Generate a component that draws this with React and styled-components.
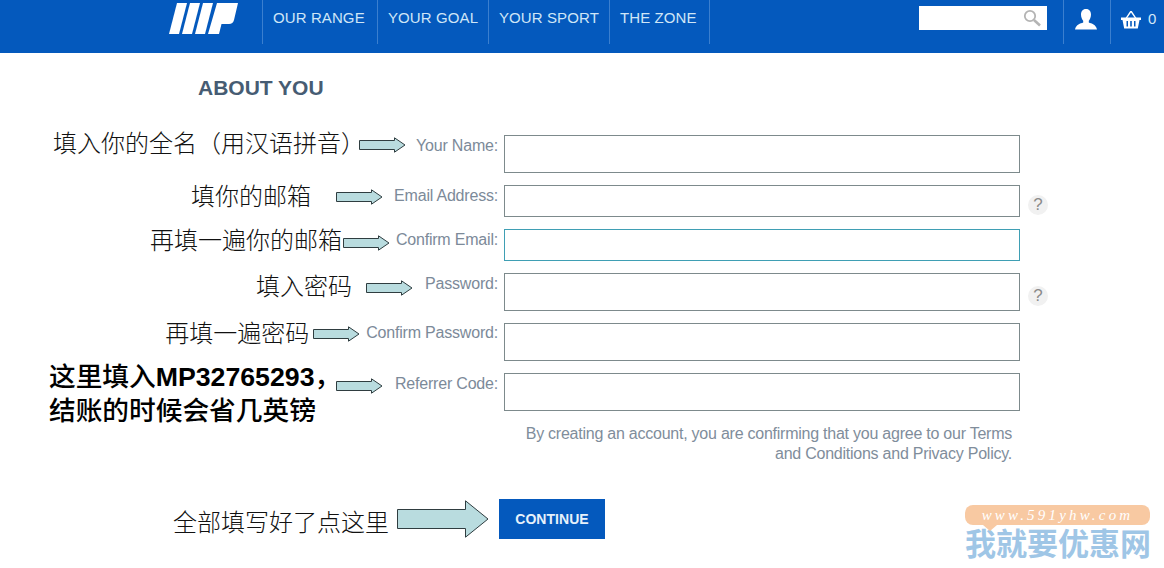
import React from "react";
import styled, { createGlobalStyle } from "styled-components";

const GlobalStyle = createGlobalStyle`
  html, body {
    margin: 0;
    padding: 0;
    background: #fff;
    font-family: "Liberation Sans", Arial, sans-serif;
  }
`;

const Page = styled.div`
  position: relative;
  width: 1164px;
  height: 568px;
  overflow: hidden;
  background: #fff;
`;

const Header = styled.header`
  height: 53px;
  display: flex;
  align-items: flex-start;
  padding-left: 169px;
  background: #0459bd;
  box-sizing: border-box;
`;

const Logo = styled.svg`
  width: 70px;
  height: 31px;
  margin: 3px 23px 0 0;
  flex: none;
`;

const Nav = styled.nav`
  display: flex;
  height: 44px;
  border-right: 1px solid #3b7fcf;
`;

const NavItem = styled.a`
  height: 44px;
  width: ${(props) => props.$width}px;
  box-sizing: border-box;
  padding: 9px 0 0 10px;
  border-left: 1px solid #3b7fcf;
  color: #cfe6f7;
  font-size: 15px;
  line-height: 18px;
  letter-spacing: 0.1px;
  white-space: nowrap;
`;

const HeaderRight = styled.div`
  display: flex;
  margin-left: auto;
  height: 44px;
`;

const Search = styled.div`
  width: 128px;
  height: 24px;
  margin: 6px 16px 0 0;
  padding-right: 6px;
  box-sizing: border-box;
  display: flex;
  align-items: center;
  justify-content: flex-end;
  background: #fff;
  color: #b4b4b4;
`;

const IconCell = styled.div`
  width: ${(props) => props.$width}px;
  box-sizing: border-box;
  display: flex;
  align-items: flex-start;
  padding: 9px 0 0 ${(props) => props.$pad}px;
  gap: 7px;
  border-left: 1px solid #3b7fcf;
  color: #fff;
`;

const Count = styled.span`
  color: #d6e8f8;
  font-size: 15px;
  line-height: 20px;
  letter-spacing: 0.5px;
`;

const Main = styled.main`
  padding-top: 23px;
`;

const Title = styled.h1`
  margin: 0 0 35px 198px;
  color: #465c73;
  font-size: 21px;
  line-height: 24px;
  font-weight: 700;
`;

const Form = styled.div`
  display: flex;
  flex-direction: column;
  gap: 12px;
`;

const Row = styled.div`
  display: flex;
  align-items: flex-start;
`;

const LabelSide = styled.div`
  width: 498px;
  display: flex;
  justify-content: flex-end;
  align-items: flex-start;
  margin-right: 6px;
`;

const Note = styled.span`
  margin-top: ${(props) => props.$top}px;
  margin-right: ${(props) => props.$gap}px;
  color: #111;
  font-family: "Noto Sans CJK SC", sans-serif;
  font-size: 24px;
  font-weight: 300;
  line-height: 28px;
  white-space: nowrap;
`;

const BoldNote = styled.div`
  height: 68px;
  margin: -15px 20px -30px 0;
  width: 267px;
  color: #000;
  font-family: "Noto Sans CJK SC", sans-serif;
  font-size: 26.7px;
  font-weight: 500;
  line-height: 34px;
  white-space: nowrap;

  b {
    font-family: "Liberation Sans", sans-serif;
    font-weight: 700;
    line-height: 1;
  }
`;

const ArrowSvg = styled.svg`
  flex: none;
  margin-top: ${(props) => props.$top}px;
  margin-right: ${(props) => props.$gap}px;
`;

const Label = styled.label`
  margin-top: ${(props) => props.$top}px;
  color: #7c8a99;
  font-size: 16px;
  line-height: 20px;
  letter-spacing: -0.2px;
  white-space: nowrap;
`;

const Input = styled.div`
  width: 516px;
  height: ${(props) => props.$height}px;
  box-sizing: border-box;
  border: 1px solid ${(props) => (props.$focus ? "#3f9fb4" : "#7d8a8c")};
  background: #fff;
`;

const Help = styled.span`
  width: 20px;
  height: 20px;
  margin: ${(props) => props.$top}px 0 0 8px;
  border-radius: 50%;
  background: #f1f1f1;
  color: #8b8b8b;
  font-size: 17px;
  line-height: 20px;
  text-align: center;
`;

const Terms = styled.p`
  width: 500px;
  margin: 13px 0 0 512px;
  color: #808d9b;
  font-size: 16px;
  line-height: 20px;
  letter-spacing: -0.24px;
  text-align: right;
`;

const Submit = styled.div`
  display: flex;
  align-items: center;
  margin: 35px 0 0 173px;
`;

const SubmitNote = styled(Note)`
  margin: 4px 8px 0 0;
`;

const Button = styled.button`
  width: 106px;
  height: 40px;
  margin-left: 10px;
  border: 0;
  background: #0459bd;
  color: #e6f1fb;
  font-family: "Liberation Sans", sans-serif;
  font-size: 14px;
  font-weight: 700;
  letter-spacing: 0.05px;
`;

const Watermark = styled.div`
  position: absolute;
  left: 965px;
  top: 505px;
  width: 185px;
`;

const Bubble = styled.div`
  position: relative;
  height: 20px;
  border-radius: 8px;
  background: #f8c9a2;
  color: #fff;
  font-family: "Liberation Serif", serif;
  font-style: italic;
  font-size: 15px;
  line-height: 20px;
  letter-spacing: 3.2px;
  text-align: center;

  &::after {
    content: "";
    position: absolute;
    left: 18px;
    top: 20px;
    border-top: 6px solid #f8c9a2;
    border-left: 7px solid transparent;
    border-right: 7px solid transparent;
  }
`;

const SiteName = styled.div`
  margin-top: -1px;
  color: #9fc6e6;
  font-family: "Noto Sans CJK SC", sans-serif;
  font-size: 31px;
  font-weight: 700;
  line-height: 36px;
  white-space: nowrap;
`;

function Arrow({ top, gap }) {
  return (
    <ArrowSvg width="47" height="16" viewBox="0 0 47 16" $top={top} $gap={gap}>
      <path
        d="M0.5 3.5H35.5V0.8L46 8L35.5 15.2V12.5H0.5Z"
        fill="#b9dcdf"
        stroke="#2f3d40"
        strokeWidth="1"
      />
    </ArrowSvg>
  );
}

const rows = [
  { label: "Your Name:", height: 38, labelTop: 1, note: "填入你的全名（用汉语拼音）", noteTop: -7, noteGap: -6, arrowTop: 2, arrowGap: 10 },
  { label: "Email Address:", height: 32, labelTop: 1, note: "填你的邮箱", noteTop: -4, noteGap: 25, arrowTop: 4, arrowGap: 11, help: 10 },
  { label: "Confirm Email:", height: 32, labelTop: 1, note: "再填一遍你的邮箱", noteTop: -4, noteGap: 1, arrowTop: 6, arrowGap: 6, focus: true },
  { label: "Password:", height: 38, labelTop: 1, note: "填入密码", noteTop: -2, noteGap: 14, arrowTop: 7, arrowGap: 12, help: 13 },
  { label: "Confirm Password:", height: 38, labelTop: 0, note: "再填一遍密码", noteTop: -5, noteGap: 4, arrowTop: 3, arrowGap: 6 },
  { label: "Referrer Code:", height: 38, labelTop: 1, bold: true, arrowTop: 5, arrowGap: 12 },
];

export default function App() {
  return (
    <Page>
      <GlobalStyle />
      <Header>
        <Logo viewBox="0 0 70 31">
          <path fill="#fff" d="M0 31H10L18 0H8Z" />
          <path fill="#fff" d="M13 31H23L31 0H21Z" />
          <path fill="#fff" d="M26 31H36L44 0H34Z" />
          <path fill="#fff" d="M48 0H69L65 17Q64 21 60 21H52.5L50 31H39Z" />
        </Logo>
        <Nav>
          <NavItem $width={115}>OUR RANGE</NavItem>
          <NavItem $width={111}>YOUR GOAL</NavItem>
          <NavItem $width={121}>YOUR SPORT</NavItem>
          <NavItem $width={100}>THE ZONE</NavItem>
        </Nav>
        <HeaderRight>
          <Search>
            <svg width="18" height="18" viewBox="0 0 18 18" fill="none" stroke="currentColor">
              <circle cx="7" cy="7" r="5.2" strokeWidth="1.8" />
              <path d="M11 11L17 16.5" strokeWidth="2.6" />
            </svg>
          </Search>
          <IconCell $width={47} $pad={11}>
            <svg width="22" height="21" viewBox="0 0 22 21" fill="currentColor">
              <path d="M11 0C14.5 0 16 2.5 16 5.5C16 8.5 14.8 10.5 13.8 11.8V13.5C16.5 14.5 21 15.5 22 20.5H0C1 15.5 5.5 14.5 8.2 13.5V11.8C7.2 10.5 6 8.5 6 5.5C6 2.5 7.5 0 11 0Z" />
            </svg>
          </IconCell>
          <IconCell $width={54} $pad={10}>
            <svg width="20" height="20" viewBox="0 0 20 20" fill="currentColor" style={{ marginTop: 1 }}>
              <path d="M9.2 1L4.6 8H6.2L10 2.4L13.8 8H15.4L10.8 1Z" />
              <path d="M0 7.5H20V10H18.5L16.8 18.5H3.2L1.5 10H0ZM5.5 11V16.5H7V11ZM9.2 11V16.5H10.8V11ZM13 11V16.5H14.5V11Z" fillRule="evenodd" />
            </svg>
            <Count>0</Count>
          </IconCell>
        </HeaderRight>
      </Header>
      <Main>
        <Title>ABOUT YOU</Title>
        <Form>
          {rows.map((row) => (
            <Row key={row.label}>
              <LabelSide>
                {row.bold ? (
                  <BoldNote>
                    这里填入<b>MP32765293</b>，
                    <br />
                    结账的时候会省几英镑
                  </BoldNote>
                ) : (
                  <Note $top={row.noteTop} $gap={row.noteGap}>
                    {row.note}
                  </Note>
                )}
                <Arrow top={row.arrowTop} gap={row.arrowGap} />
                <Label $top={row.labelTop}>{row.label}</Label>
              </LabelSide>
              <Input $height={row.height} $focus={row.focus} />
              {row.help && <Help $top={row.help}>?</Help>}
            </Row>
          ))}
        </Form>
        <Terms>
          By creating an account, you are confirming that you agree to our Terms and Conditions and Privacy Policy.
        </Terms>
        <Submit>
          <SubmitNote>全部填写好了点这里</SubmitNote>
          <svg width="92" height="38" viewBox="0 0 92 38">
            <path
              d="M0.5 9.5H68.5V0.8L91 19L68.5 37.2V28.5H0.5Z"
              fill="#b9dcdf"
              stroke="#2f3d40"
              strokeWidth="1"
            />
          </svg>
          <Button>CONTINUE</Button>
        </Submit>
      </Main>
      <Watermark>
        <Bubble>www.591yhw.com</Bubble>
        <SiteName>我就要优惠网</SiteName>
      </Watermark>
    </Page>
  );
}
